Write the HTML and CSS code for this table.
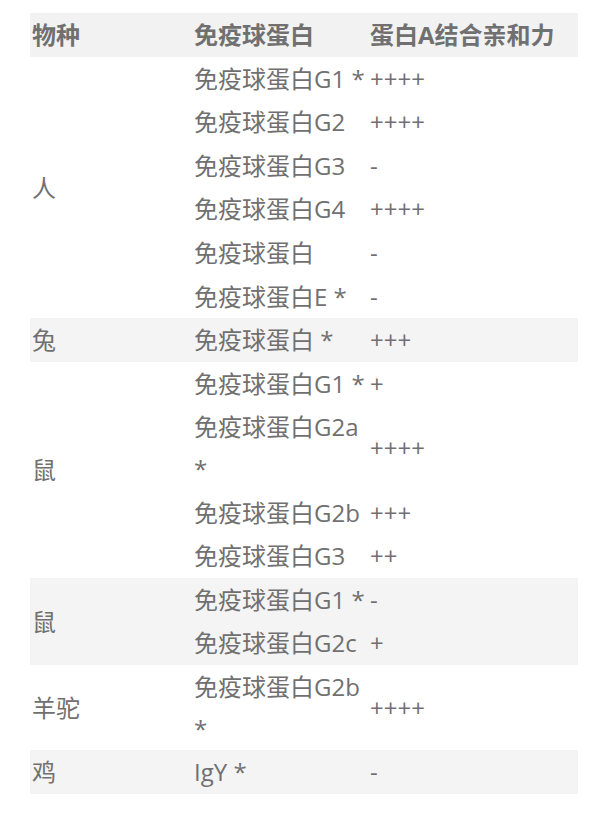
FILE: index.html
```html
<!DOCTYPE html>
<html lang="zh">
<head>
<meta charset="utf-8">
<link rel="stylesheet" href="styles.css">
</head>
<body>
<table class="ig-table">
  <colgroup>
    <col class="c1"><col class="c2"><col class="c3">
  </colgroup>
  <thead>
    <tr class="head"><th>物种</th><th>免疫球蛋白</th><th>蛋白A结合亲和力</th></tr>
  </thead>
  <tbody>
    <tr><td rowspan="6">人</td><td>免疫球蛋白G1 *</td><td>++++</td></tr>
    <tr><td>免疫球蛋白G2</td><td>++++</td></tr>
    <tr><td>免疫球蛋白G3</td><td>-</td></tr>
    <tr><td>免疫球蛋白G4</td><td>++++</td></tr>
    <tr><td>免疫球蛋白</td><td>-</td></tr>
    <tr><td>免疫球蛋白E *</td><td>-</td></tr>
    <tr class="alt"><td>兔</td><td>免疫球蛋白 *</td><td>+++</td></tr>
    <tr><td rowspan="4">鼠</td><td>免疫球蛋白G1 *</td><td>+</td></tr>
    <tr><td>免疫球蛋白G2a *</td><td>++++</td></tr>
    <tr><td>免疫球蛋白G2b</td><td>+++</td></tr>
    <tr><td>免疫球蛋白G3</td><td>++</td></tr>
    <tr class="alt"><td rowspan="2">鼠</td><td>免疫球蛋白G1 *</td><td>-</td></tr>
    <tr class="alt"><td>免疫球蛋白G2c</td><td>+</td></tr>
    <tr><td>羊驼</td><td>免疫球蛋白G2b *</td><td>++++</td></tr>
    <tr class="alt"><td>鸡</td><td>IgY *</td><td>-</td></tr>
  </tbody>
</table>
</body>
</html>
```
FILE: styles.css
```css
html, body {
  margin: 0;
  padding: 0;
  background: #ffffff;
}
body {
  padding: 13px 38px 0 30px;
  font-family: "Open Sans", "Noto Sans CJK SC", sans-serif;
  font-size: 24px;
  color: #707070;
}
.ig-table {
  width: 548px;
  border-collapse: collapse;
  border-spacing: 0;
  table-layout: fixed;
}
.c1 { width: 162px; }
.c2 { width: 176px; }
.c3 { width: 210px; }
.ig-table th,
.ig-table td {
  padding: 1px 2px;
  line-height: 41.6px;
  text-align: left;
  vertical-align: middle;
}
.ig-table th {
  font-weight: 700;
}
.head {
  background: #f2f2f2;
}
.alt {
  background: #f4f4f4;
}
```
